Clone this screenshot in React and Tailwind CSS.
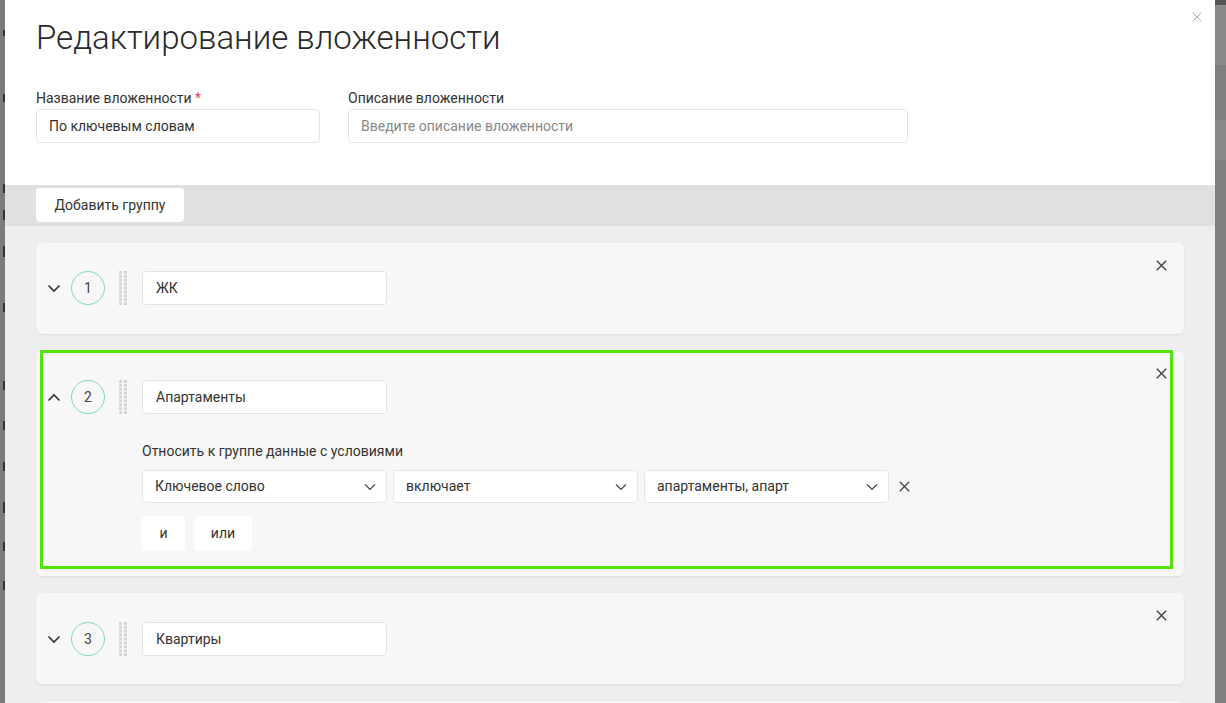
import React from 'react';

const font = { fontFamily: 'Roboto, "Noto Sans", sans-serif' };

const Chevron = ({ up }) => (
    <svg width="14" height="9" viewBox="0 0 14 9" fill="none" className="shrink-0">
        {up ? (
            <path d="M1.5 7.5L7 2l5.5 5.5" stroke="#333" strokeWidth="1.6" />
        ) : (
            <path d="M1.5 1.5L7 7l5.5-5.5" stroke="#333" strokeWidth="1.6" />
        )}
    </svg>
);

const SmallChevron = () => (
    <svg width="12" height="8" viewBox="0 0 12 8" fill="none" className="shrink-0">
        <path d="M1 1.5L6 6.2l5-4.7" stroke="#555" strokeWidth="1.4" />
    </svg>
);

const Cross = ({ size = 11, color = '#444', width = 1.4 }) => (
    <svg width={size} height={size} viewBox="0 0 11 11" fill="none">
        <path d="M0.8 0.8l9.4 9.4M10.2 0.8l-9.4 9.4" stroke={color} strokeWidth={width} />
    </svg>
);

const DragHandle = () => (
    <svg width="8" height="34" viewBox="0 0 8 35" className="shrink-0 block">
        {Array.from({ length: 9 }).map((_, r) => (
            <g key={r}>
                <rect x="0" y={r * 4} width="3" height="3" fill="#d4d4d4" />
                <rect x="5" y={r * 4} width="3" height="3" fill="#d4d4d4" />
            </g>
        ))}
    </svg>
);

const GroupHeader = ({ num, name, open }) => (
    <div className="flex items-center h-[34px] pl-[11px]">
        <Chevron up={open} />
        <div className="ml-[10px] w-[34px] h-[34px] rounded-full border border-[#7fdcb3] flex items-center justify-center text-[14px] text-[#444]">
            {num}
        </div>
        <div className="ml-[14px]">
            <DragHandle />
        </div>
        <div className="ml-[15px] w-[245px] h-[34px] bg-white border border-[#e4e4e4] rounded-[4px] flex items-center px-[13px] text-[14px] text-[#333]">
            {name}
        </div>
    </div>
);

const Select = ({ value }) => (
    <div className="w-[245px] h-[33px] bg-white border border-[#e6e6e6] rounded-[4px] flex items-center justify-between pl-[12px] pr-[10px] text-[14px] text-[#333]">
        <span>{value}</span>
        <SmallChevron />
    </div>
);

const Card = ({ children, highlight, noClose }) => (
    <div className="relative shrink-0 bg-[#f7f7f7] rounded-[6px] shadow-[0_1px_2px_rgba(0,0,0,0.08)]">
        {highlight && (
            <div className="absolute left-[4px] right-[11px] top-[-1px] bottom-[7px] border-[3px] border-[#55e10b] pointer-events-none" />
        )}
        {!noClose && (
            <button className="absolute right-[17px] top-[17px]">
                <Cross />
            </button>
        )}
        {children}
    </div>
);

// glyph scraps of the page behind the overlay, cut by the modal edge
const scraps = [
    'mt-[30px] h-[6px]',
    'mt-[58px] h-[8px]',
    'mt-[82px] h-[9px]',
    'mt-[17px] h-[10px]',
    'mt-[26px] h-[11px]',
    'mt-[46px] h-[9px]',
    'mt-[69px] h-[9px]',
    'mt-[31px] h-[9px]',
    'mt-[32px] h-[9px]',
    'mt-[31px] h-[11px]',
    'mt-[29px] h-[9px]',
    'mt-[30px] h-[9px]',
];

export default function App() {
    return (
        <div className="flex w-[1226px] h-[703px] overflow-hidden bg-[#808080]" style={font}>
            {/* backdrop, left */}
            <div className="w-[5px] shrink-0 overflow-hidden bg-[#7c7c7c] flex flex-col items-end">
                {scraps.map((c, i) => (
                    <div key={i} className={`${c} w-[2px] shrink-0 bg-[#3a3030]`} />
                ))}
            </div>

            {/* modal */}
            <div className="w-[1210px] shrink-0 flex flex-col bg-[#eeeeee] overflow-hidden">
                <div className="relative shrink-0 bg-white px-[31px] pt-[18px] h-[185px]">
                    <button className="absolute right-[13px] top-[12px]">
                        <Cross size={10} color="#aaa" width={1.1} />
                    </button>
                    <h1 className="text-[33px] leading-[40px] font-light text-[#2a2a2a]">Редактирование вложенности</h1>
                    <div className="flex gap-[28px] mt-[31px]">
                        <div className="w-[284px]">
                            <div className="text-[14px] leading-[18px] text-[#333]">
                                Название вложенности <span className="text-[#e8484d]">*</span>
                            </div>
                            <div className="mt-[2px] h-[34px] border border-[#e4e4e4] rounded-[4px] flex items-center px-[12px] text-[14px] text-[#333]">
                                По ключевым словам
                            </div>
                        </div>
                        <div className="w-[560px]">
                            <div className="text-[14px] leading-[18px] text-[#333]">Описание вложенности</div>
                            <div className="mt-[2px] h-[34px] border border-[#e4e4e4] rounded-[4px] flex items-center px-[12px] text-[14px] text-[#888]">
                                Введите описание вложенности
                            </div>
                        </div>
                    </div>
                </div>

                <div className="h-[41px] shrink-0 bg-[#e0e0e0] px-[31px] pt-[3px]">
                    <button className="h-[34px] w-[148px] bg-white rounded-[4px] text-[14px] text-[#333]">
                        Добавить группу
                    </button>
                </div>

                <div className="px-[31px] pt-[17px] flex flex-col gap-[17px]">
                    <Card>
                        <div className="pt-[28px] pb-[29px]">
                            <GroupHeader num="1" name="ЖК" />
                        </div>
                    </Card>

                    <Card highlight>
                        <div className="pt-[29px] pb-[25px]">
                            <GroupHeader num="2" name="Апартаменты" open />
                            <div className="pl-[106px] mt-[29px]">
                                <div className="text-[14px] leading-[16px] text-[#333]">Относить к группе данные с условиями</div>
                                <div className="flex items-center gap-[6px] mt-[11px]">
                                    <Select value="Ключевое слово" />
                                    <Select value="включает" />
                                    <Select value="апартаменты, апарт" />
                                    <div className="ml-[4px]">
                                        <Cross size={11} color="#444" width={1.3} />
                                    </div>
                                </div>
                                <div className="flex gap-[9px] mt-[13px]">
                                    <button className="h-[35px] w-[43px] bg-white rounded-[4px] text-[14px] text-[#333]">и</button>
                                    <button className="h-[35px] w-[58px] bg-white rounded-[4px] text-[14px] text-[#333]">или</button>
                                </div>
                            </div>
                        </div>
                    </Card>

                    <Card>
                        <div className="pt-[29px] pb-[28px]">
                            <GroupHeader num="3" name="Квартиры" />
                        </div>
                    </Card>

                    <Card noClose>
                        <div className="h-[90px]" />
                    </Card>
                </div>
            </div>

            {/* backdrop, right */}
            <div className="w-[11px] shrink-0 flex flex-col">
                <div className="h-[5px] bg-[#555]" />
                <div className="h-[60px] bg-[#8a8a8a]" />
                <div className="h-[55px] bg-[#7f7f7f]" />
                <div className="h-[40px] bg-[#8a8a8a]" />
                <div className="flex-1 bg-[#808080]" />
            </div>
        </div>
    );
}
